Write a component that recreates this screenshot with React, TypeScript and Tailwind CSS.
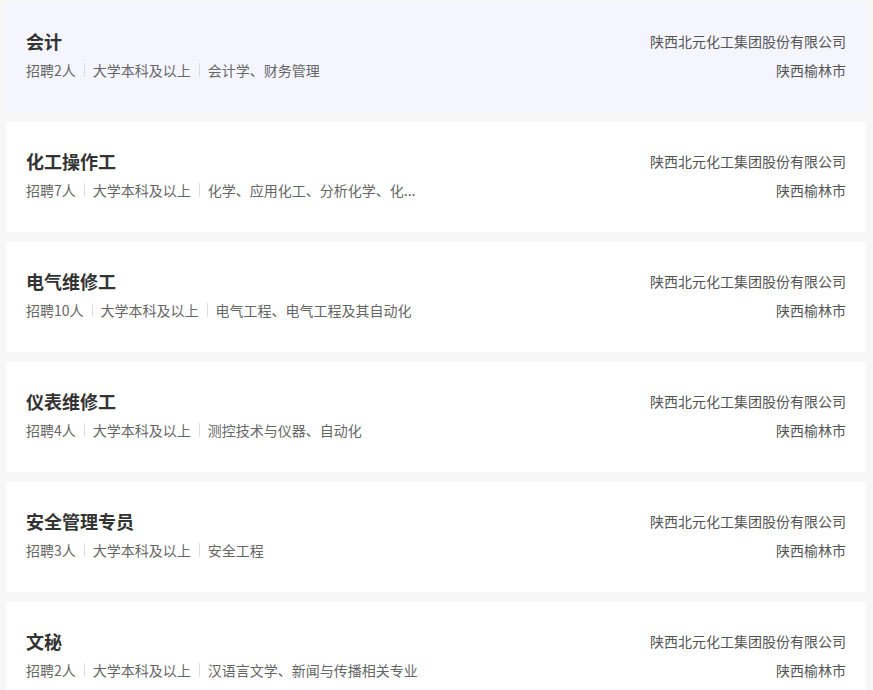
const jobs = [
  { title: "会计", count: 2, edu: "大学本科及以上", major: "会计学、财务管理", active: true },
  { title: "化工操作工", count: 7, edu: "大学本科及以上", major: "化学、应用化工、分析化学、化..." },
  { title: "电气维修工", count: 10, edu: "大学本科及以上", major: "电气工程、电气工程及其自动化" },
  { title: "仪表维修工", count: 4, edu: "大学本科及以上", major: "测控技术与仪器、自动化" },
  { title: "安全管理专员", count: 3, edu: "大学本科及以上", major: "安全工程" },
  { title: "文秘", count: 2, edu: "大学本科及以上", major: "汉语言文学、新闻与传播相关专业" },
];

const Divider = () => <span className="mx-2 h-[14px] w-px bg-[#dddddd]" />;

export default function App() {
  return (
    <div
      className="min-h-screen bg-[#f7f7f7] pl-[6px] pt-[2px]"
      style={{ fontFamily: '"Noto Sans CJK SC", "Noto Sans", sans-serif' }}
    >
      <div className="flex w-[860px] flex-col gap-[10px]">
        {jobs.map((job) => (
          <div
            key={job.title}
            className={`flex h-[110px] justify-between px-5 pt-[27px] ${
              job.active ? "bg-[#f4f5ff]" : "bg-white"
            }`}
          >
            {/* left: title + tags */}
            <div className="min-w-0">
              <h3 className="text-[18px] font-bold leading-6 text-[#333333]">{job.title}</h3>
              <div className="mt-[7px] flex items-center whitespace-nowrap text-[14px] leading-5 text-[#666666]">
                <span>招聘{job.count}人</span>
                <Divider />
                <span>{job.edu}</span>
                <Divider />
                <span>{job.major}</span>
              </div>
            </div>

            {/* right: company + city */}
            <div className="flex flex-col items-end text-[14px] text-[#555555]">
              <span className="leading-6">陕西北元化工集团股份有限公司</span>
              <span className="mt-[7px] leading-5">陕西榆林市</span>
            </div>
          </div>
        ))}
      </div>
    </div>
  );
}
